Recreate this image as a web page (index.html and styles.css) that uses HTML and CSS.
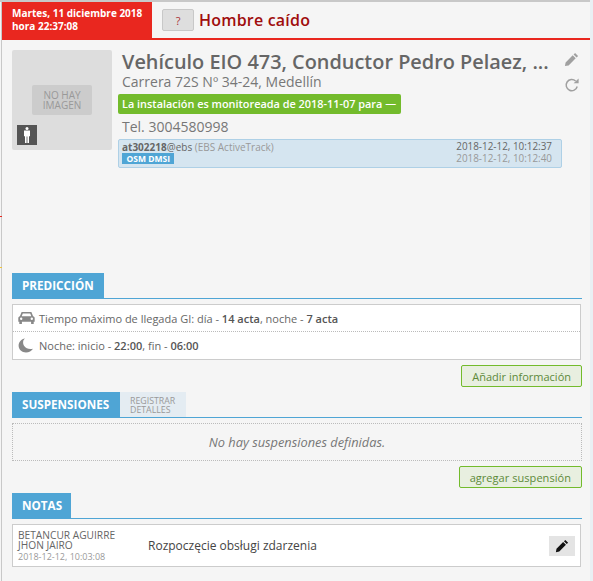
FILE: index.html
```html
<!DOCTYPE html>
<html lang="es">
<head>
    <meta charset="UTF-8">
    <meta name="viewport" content="width=device-width, initial-scale=1.0">
    <title>Hombre caído</title>
    <link rel="stylesheet" href="styles.css">
</head>
<body>
    <div class="page">
        <div class="header">
            <div class="header-date">Martes, 11 diciembre 2018<br>hora 22:37:08</div>
            <button class="btn-help">?</button>
            <h1>Hombre caído</h1>
        </div>

        <div class="content">
            <div class="info">
                <div class="photo">
                    <div class="no-image">NO HAY IMAGEN</div>
                    <div class="person">
                        <svg width="10" height="16" viewBox="0 0 10 16"><circle cx="5" cy="1.6" r="1.5" fill="#fff"/><path d="M2 3.600h6v5.600H7v6.800H5.400V9.600H4.600V16H3V9.200H2z" fill="#fff"/></svg>
                    </div>
                </div>
                <div class="details">
                    <h2>Vehículo EIO 473, Conductor Pedro Pelaez, ...</h2>
                    <div class="address">Carrera 72S Nº 34-24, Medellín</div>
                    <div class="monitor">La instalación es monitoreada de 2018-11-07 para —</div>
                    <div class="phone">Tel. 3004580998</div>
                    <div class="device">
                        <div>
                            <div class="device-name"><strong>at302218</strong>@ebs <span>(EBS ActiveTrack)</span></div>
                            <span class="tag">OSM DMSI</span>
                        </div>
                        <div class="device-dates">
                            <div>2018-12-12, 10:12:37</div>
                            <div class="light">2018-12-12, 10:12:40</div>
                        </div>
                    </div>
                </div>
                <div class="actions">
                    <svg width="15" height="15" viewBox="0 0 16 16"><path d="M11.800 1l3.200 3.200-1.600 1.600-3.200-3.200zM9.300 3.500l3.200 3.200-7.600 7.600L1 15l.7-3.900z" fill="#a0a0a0"/></svg>
                    <svg width="16" height="16" viewBox="0 0 16 16"><path d="M13.200 9.500A5.600 5.600 0 1 1 11.600 4" fill="none" stroke="#a0a0a0" stroke-width="1.500"/><path d="M9.600 6.200h5V1.400z" fill="#a0a0a0"/></svg>
                </div>
            </div>

            <div class="section-tabs">
                <div class="tab">PREDICCIÓN</div>
            </div>
            <div class="box">
                <div class="box-row dotted">
                    <svg width="17" height="14" viewBox="0 0 17 14"><path d="M3.600 1h9.800l1.700 4.200c1 .4 1.600 1 1.600 2v3.600h-1V13h-2.600v-2.200H3.900V13H1.300v-2.200h-1V7.200c0-1 .6-1.600 1.600-2zM4.800 2.400L3.700 5.200h9.600l-1.100-2.800zM3.200 6.600a1.200 1.200 0 1 0 0 2.400 1.200 1.200 0 0 0 0-2.400zm10.600 0a1.200 1.200 0 1 0 0 2.400 1.200 1.200 0 0 0 0-2.400z" fill="#888" fill-rule="evenodd"/></svg>
                    <span>Tiempo máximo de llegada GI: día - <b>14 acta</b>, noche - <b>7 acta</b></span>
                </div>
                <div class="box-row">
                    <svg width="17" height="15" viewBox="0 0 17 15"><path d="M7 .5C4.700 2 4.600 5.500 6.200 8c1.700 2.500 5 3.600 8.800 2.700C13.500 13 11 14.500 8 14.500 3.800 14.500.6 11.300.6 7.500.6 4 3.300 1 7 .5z" fill="#888"/></svg>
                    <span>Noche: inicio - <b>22:00</b>, fin - <b>06:00</b></span>
                </div>
            </div>
            <div class="btn-row"><button class="btn-green">Añadir información</button></div>

            <div class="section-tabs">
                <div class="tab tab-susp">SUSPENSIONES</div>
                <div class="tab-light">REGISTRAR DETALLES</div>
            </div>
            <div class="empty">No hay suspensiones definidas.</div>
            <div class="btn-row"><button class="btn-green btn-wide">agregar suspensión</button></div>

            <div class="section-tabs">
                <div class="tab tab-notas">NOTAS</div>
            </div>
            <div class="box note">
                <div class="note-author">
                    BETANCUR AGUIRRE<br>JHON JAIRO
                    <div class="note-date">2018-12-12, 10:03:08</div>
                </div>
                <div class="note-text">Rozpoczęcie obsługi zdarzenia</div>
                <button class="btn-edit">
                    <svg width="14" height="14" viewBox="0 0 16 16"><path d="M11.800 1l3.200 3.200-1.600 1.600-3.200-3.200zM9.300 3.500l3.200 3.200-7.600 7.600L1 15l.7-3.900z" fill="#111"/></svg>
                </button>
            </div>
        </div>
    </div>
</body>
</html>
```

FILE: styles.css
```css
* {
    margin: 0;
    padding: 0;
    box-sizing: border-box;
}

html, body {
    height: 100%;
    overflow: hidden;
}

body {
    font-family: "Open Sans", "Liberation Sans", sans-serif;
    color: #666;
    /* marcas del borde izquierdo y la linea gris */
    background:
        linear-gradient(#e9271f, #e9271f) 0 216px / 2px 1px no-repeat,
        linear-gradient(#eec43c, #eec43c) 0 267px / 2px 1px no-repeat,
        linear-gradient(#c8c8c8, #c8c8c8) 1px 0 / 1px 100% no-repeat,
        #f5f5f5;
}

.page {
    height: 100%;
    margin-right: 3px;
    padding-left: 2px;
    border-top: 2px solid #c8c8c8;
    box-shadow: 3px 0 0 #e9eff3;
}

button {
    font-family: inherit;
}

.header {
    height: 38px;
    display: flex;
    align-items: center;
    border-bottom: 2px solid #e9271f;
}

.header-date {
    width: 150px;
    height: 36px;
    padding: 5px 0 0 10px;
    background: #e9271f;
    color: #fff;
    font-size: 10px;
    line-height: 13px;
    font-weight: 700;
    align-self: flex-start;
}

.btn-help {
    width: 32px;
    height: 22px;
    margin-left: 10px;
    background: #dedede;
    border: 1px solid #c8c8c8;
    border-radius: 2px;
    color: #a33;
    font-size: 11px;
}

h1 {
    margin-left: 5px;
    font-size: 16px;
    font-weight: 600;
    color: #a00d0d;
    letter-spacing: 0.2px;
}

.content {
    padding: 10px 8px 0 10px;
}

.info {
    display: flex;
    height: 218px;
}

.photo {
    width: 100px;
    height: 100px;
    padding: 35px 20px 0;
    background: #ddd;
    border-radius: 2px;
    display: flex;
    flex-direction: column;
    justify-content: space-between;
}

.no-image {
    height: 30px;
    width: 60px;
    background: #ccc;
    border-radius: 2px;
    color: #999;
    font-size: 10px;
    line-height: 10px;
    padding-top: 5px;
    text-align: center;
}

.person {
    width: 20px;
    height: 20px;
    margin: 0 0 5px -15px;
    background: #555;
    display: flex;
    align-items: center;
    justify-content: center;
}

.details {
    width: 444px;
    margin-left: 6px;
}

h2 {
    margin-left: 4px;
    font-size: 19.9px;
    line-height: 24px;
    font-weight: 600;
    color: #666;
    white-space: nowrap;
}

.address {
    margin-left: 4px;
    font-size: 14px;
    line-height: 16px;
    color: #777;
}

.monitor {
    width: 283px;
    height: 20px;
    margin-top: 4px;
    padding-left: 4px;
    background: #73bb2c;
    border-radius: 2px;
    color: #fff;
    font-size: 10.9px;
    line-height: 20px;
    font-weight: 600;
    white-space: nowrap;
}

.phone {
    margin: 3px 0 0 4px;
    font-size: 14px;
    line-height: 19px;
    color: #777;
}

.device {
    height: 29px;
    margin-top: 3px;
    padding: 0 9px 0 3px;
    display: flex;
    justify-content: space-between;
    background: #d5e5f0;
    border: 1px solid #aed0e6;
    border-radius: 2px;
    font-size: 10px;
    line-height: 12px;
}

.device-name {
    padding-top: 1px;
}

.device-name span {
    color: #999;
}

.tag {
    display: inline-block;
    padding: 0 4.5px;
    height: 11px;
    background: #4fa5d5;
    color: #fff;
    font-size: 8.5px;
    line-height: 11px;
    font-weight: 700;
    vertical-align: top;
}

.device-dates {
    font-size: 9.9px;
}

.device-dates .light {
    color: #999;
}

.actions {
    margin: 2px 0 0 2px;
    display: flex;
    flex-direction: column;
    gap: 10px;
}

.section-tabs {
    height: 26px;
    margin-top: 5px;
    display: flex;
    border-bottom: 1px solid #4fa5d5;
}

.tab {
    padding: 0 10px;
    height: 25px;
    background: #4fa5d5;
    color: #fff;
    font-size: 11.7px;
    line-height: 25px;
    font-weight: 700;
}

.tab-susp {
    width: 108px;
}

.tab-notas {
    width: 59px;
}

.tab-light {
    width: 66px;
    height: 25px;
    padding: 5px 0 0 10px;
    background: #e4ecf2;
    color: #999;
    font-size: 8.8px;
    line-height: 9px;
}

.box {
    width: 569px;
    margin-top: 5px;
    background: #fff;
    border: 1px solid #ccc;
}

.box-row {
    height: 27px;
    padding-left: 5px;
    display: flex;
    align-items: center;
    gap: 4px;
    font-size: 11px;
}

.box-row.dotted {
    border-bottom: 1px dotted #bbb;
}

.box-row b {
    font-weight: 600;
    color: #555;
}

.btn-row {
    margin-top: 5px;
    display: flex;
    justify-content: flex-end;
}

.btn-green {
    height: 22px;
    padding: 0 10px;
    background: #e8efe0;
    border: 1px solid #73bb2c;
    border-radius: 2px;
    color: #5d8a3a;
    font-size: 11px;
}

.btn-wide {
    letter-spacing: 0.05px;
}

.empty {
    height: 38px;
    margin-top: 5px;
    border: 1px dotted #bbb;
    color: #777;
    font-size: 12.8px;
    font-style: italic;
    line-height: 36px;
    text-align: center;
}

.note {
    height: 43px;
    padding: 0 5px;
    display: flex;
    align-items: center;
}

.note-author {
    width: 130px;
    padding-top: 1px;
    font-size: 10.2px;
    line-height: 10px;
    color: #666;
}

.note-date {
    margin-top: 1px;
    font-size: 9px;
    line-height: 12px;
    color: #999;
}

.note-text {
    flex: 1;
    font-size: 12px;
    color: #444;
}

.btn-edit {
    width: 26px;
    height: 20px;
    background: #e4e4e4;
    border: none;
    display: flex;
    align-items: center;
    justify-content: center;
}
```
